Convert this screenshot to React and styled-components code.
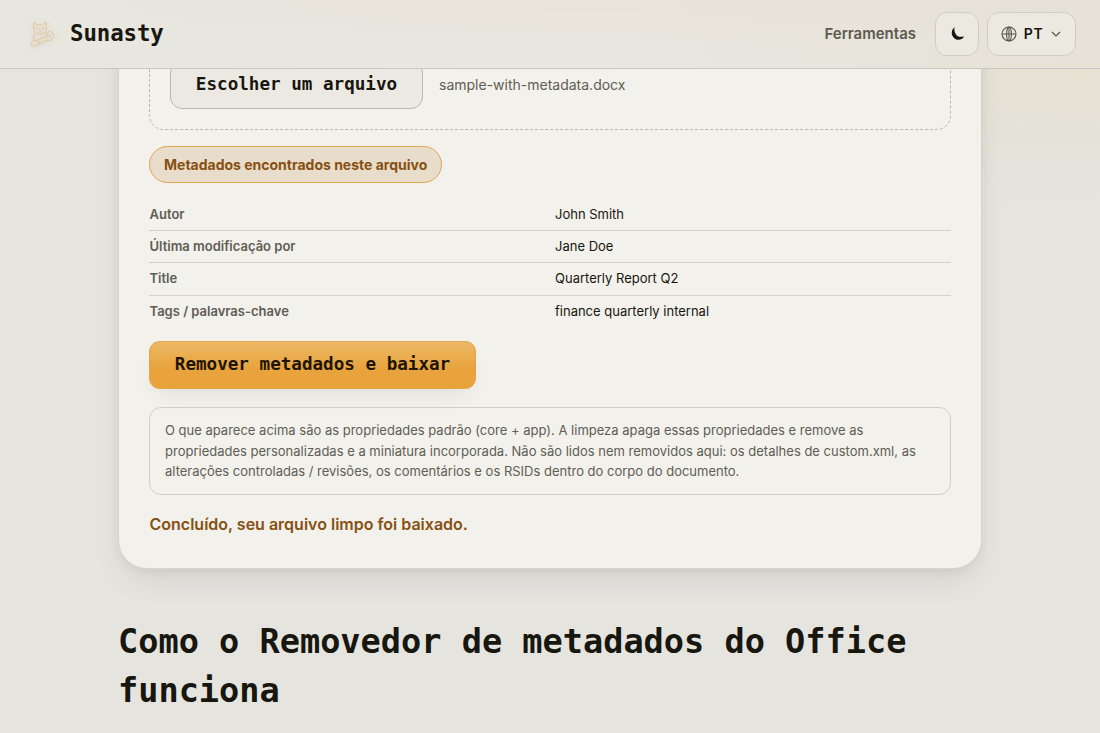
import React from "react";
import styled, { createGlobalStyle } from "styled-components";

const mono = `"DejaVu Sans Mono", "Liberation Mono", monospace`;

const GlobalStyle = createGlobalStyle`
  * { box-sizing: border-box; }
  body {
    margin: 0;
    height: 733px;
    overflow: hidden;
    font-family: Inter, "Liberation Sans", sans-serif;
    color: #17160f;
    background:
      radial-gradient(ellipse 480px 170px at 1080px 50px, rgba(231, 221, 190, 0.4), rgba(231, 221, 190, 0) 100%),
      #e5e4df;
  }
`;

const Header = styled.header`
  position: relative;
  z-index: 2;
  height: 69px;
  padding: 0 24px 1px 28px;
  display: flex;
  align-items: center;
  border-bottom: 1px solid #c9c8c2;
  background:
    radial-gradient(ellipse 560px 50px at 620px 0, rgba(234, 222, 210, 0.45), transparent),
    linear-gradient(90deg, #e7e6df 0%, #e8e7e0 55%, #e6e2d7 100%);
`;

const Brand = styled.a`
  display: flex;
  align-items: center;
  gap: 15px;
  font: 700 22.4px/1 ${mono};
  letter-spacing: -0.1px;
  margin-right: auto;
`;

const CatIcon = styled.svg`
  width: 27px;
  height: 30px;
  fill: none;
  stroke: #e9c28d;
  stroke-width: 0.9;
  stroke-linejoin: round;
  stroke-linecap: round;
  filter: drop-shadow(0 1px 3px rgba(120, 110, 90, 0.25));
`;

const NavLink = styled.a`
  font-size: 15px;
  font-weight: 600;
  color: #5c5a50;
  margin-right: 19px;
`;

const HeaderButton = styled.button`
  height: 44px;
  width: ${(p) => p.$width}px;
  margin-left: ${(p) => p.$gap || 0}px;
  padding: 0;
  display: flex;
  align-items: center;
  justify-content: center;
  gap: 7px;
  border: 1px solid #cfcdc4;
  border-radius: 12px;
  background: #ece9e1;
  color: #17160f;
  font: 600 14px/1 Inter, sans-serif;
  letter-spacing: 0.6px;
`;

const Content = styled.main`
  width: 864px;
  margin: -40px auto 0;
`;

const Card = styled.section`
  padding: 11px 30px 32px;
  border: 1px solid #d6d5cd;
  border-radius: 0 0 29px 29px;
  background: #f2f1ec;
  box-shadow: 0 14px 30px -8px rgba(60, 55, 35, 0.14), 0 2px 8px rgba(60, 55, 35, 0.05);
`;

const DropZone = styled.div`
  position: relative;
  display: flex;
  align-items: center;
  gap: 16px;
  height: 89px;
  padding: 0 21px 2px;
`;

const DashedOutline = styled.svg`
  position: absolute;
  inset: 0;
  width: 802px;
  height: 89px;
  fill: none;
  stroke: #b9b7ae;
  stroke-dasharray: 3 2;
`;

const ChooseButton = styled.button`
  height: 48px;
  width: 253px;
  padding: 0;
  border: 1px solid #b9b7ae;
  border-radius: 12px;
  background: #ece9e2;
  color: #17160f;
  font: 700 17.6px/1 ${mono};
`;

const FileName = styled.span`
  font-size: 14px;
  color: #5f5d54;
`;

const Badge = styled.div`
  display: flex;
  align-items: center;
  width: 293px;
  height: 37px;
  margin-top: 16px;
  padding-left: 14px;
  border: 1px solid #e2a64c;
  border-radius: 19px;
  background: #e8ddca;
  color: #875012;
  font-size: 14px;
  font-weight: 700;
  white-space: nowrap;
`;

const MetaList = styled.dl`
  margin: 16px 0 0;
`;

const MetaRow = styled.div`
  display: grid;
  grid-template-columns: 405.5px 1fr;
  align-items: center;
  height: 32.2px;
  padding: 0 0 1px 0.5px;
  font-size: 13px;
  line-height: 20px;
  border-bottom: 1px solid #d3d2ca;
  &:last-child { border-bottom-color: transparent; }
`;

const MetaTerm = styled.dt`
  font-weight: 600;
  color: #5f5d54;
`;

const MetaValue = styled.dd`
  margin: 0;
`;

const CleanButton = styled.button`
  display: block;
  width: 327px;
  height: 48px;
  margin-top: 13px;
  padding: 0;
  border: 1px solid #e5a443;
  border-top-color: #dda957;
  border-radius: 11px;
  background: linear-gradient(#edb966, #e8a33d 58%);
  box-shadow: 0 12px 22px -10px rgba(60, 55, 35, 0.12);
  color: #1e1403;
  font: 700 17.6px/1 ${mono};
`;

const Note = styled.p`
  height: 88px;
  margin: 18px 0 0;
  padding: 12.5px 15px;
  border: 1px solid #d0cfc7;
  border-radius: 12px;
  color: #5f5d54;
  font-size: 13px;
  line-height: 20.4px;
  white-space: nowrap;
`;

const Status = styled.p`
  margin: 17px 0 0 0.5px;
  color: #875012;
  font-size: 16px;
  line-height: 24px;
  font-weight: 600;
`;

const Title = styled.h2`
  margin: 48px 0 0;
  font: 700 33.6px/49px ${mono};
`;

const metadata = [
  ["Autor", "John Smith"],
  ["Última modificação por", "Jane Doe"],
  ["Title", "Quarterly Report Q2"],
  ["Tags / palavras-chave", "finance quarterly internal"],
];

export default function App() {
  return (
    <>
      <GlobalStyle />
      <Header>
        <Brand>
          <CatIcon viewBox="0 0 27 30">
            <path d="M5.500 8.500 L6 3 L9 6 Q12 5.200 14.500 6 L18 3 L18.500 9 Q18.500 14.500 12 15 Q5.500 14 5.500 8.500Z" />
            <path d="M8.500 9.500q1-.8 2 0M14 9.500q1-.8 2 0M11.500 11.800l.8.600.8-.6" />
            <path d="M7 14 Q4.500 18 5.500 21.500 M17.500 13.500 Q19.500 16 18.500 20" />
            <path d="M19 16 Q19 12 22.500 12.500 Q27 14.500 25 19 Q23 22 17 22 L8 26.500 Q3.500 28 3 24.500 Q3.200 21.500 8 21.500 L17 18" />
            <path d="M20.500 17q1.500-1.500 2.500.5M9 22l3 1.500" />
          </CatIcon>
          Sunasty
        </Brand>
        <NavLink>Ferramentas</NavLink>
        <HeaderButton $width={44} aria-label="Tema">
          <svg width="18" height="18" viewBox="0 0 18 18">
            <path d="M6.500 2.300C2.800 5 3 10.500 6.300 13.200c3.200 2.600 7.800 1.800 9.900-1.800-3.500 1-6.300.4-8-1.700C6.600 7.700 6 5.100 6.500 2.300Z" fill="#17160f" />
          </svg>
        </HeaderButton>
        <HeaderButton $width={89} $gap={8}>
          <svg width="16" height="16" viewBox="0 0 16 16" fill="none" stroke="#55534a" strokeWidth="1.1">
            <circle cx="8" cy="8" r="7" />
            <ellipse cx="8" cy="8" rx="2.400" ry="7" />
            <path d="M1 8h14M8 1v14" />
          </svg>
          PT
          <svg width="12" height="10" viewBox="0 0 12 10" fill="none" stroke="#55534a" strokeWidth="1.200">
            <path d="M2 3l4 4 4-4" />
          </svg>
        </HeaderButton>
      </Header>
      <Content>
        <Card>
          <DropZone>
            <DashedOutline viewBox="0 0 802 89">
              <rect x="0.5" y="0.5" width="801" height="88" rx="14" />
            </DashedOutline>
            <ChooseButton>Escolher um arquivo</ChooseButton>
            <FileName>sample-with-metadata.docx</FileName>
          </DropZone>
          <Badge>Metadados encontrados neste arquivo</Badge>
          <MetaList>
            {metadata.map(([term, value]) => (
              <MetaRow key={term}>
                <MetaTerm>{term}</MetaTerm>
                <MetaValue>{value}</MetaValue>
              </MetaRow>
            ))}
          </MetaList>
          <CleanButton>Remover metadados e baixar</CleanButton>
          <Note>
            O que aparece acima são as propriedades padrão (core + app). A limpeza apaga essas propriedades e remove as
            <br />
            propriedades personalizadas e a miniatura incorporada. Não são lidos nem removidos aqui: os detalhes de custom.xml, as
            <br />
            alterações controladas / revisões, os comentários e os RSIDs dentro do corpo do documento.
          </Note>
          <Status>Concluído, seu arquivo limpo foi baixado.</Status>
        </Card>
        <Title>Como o Removedor de metadados do Office funciona</Title>
      </Content>
    </>
  );
}
